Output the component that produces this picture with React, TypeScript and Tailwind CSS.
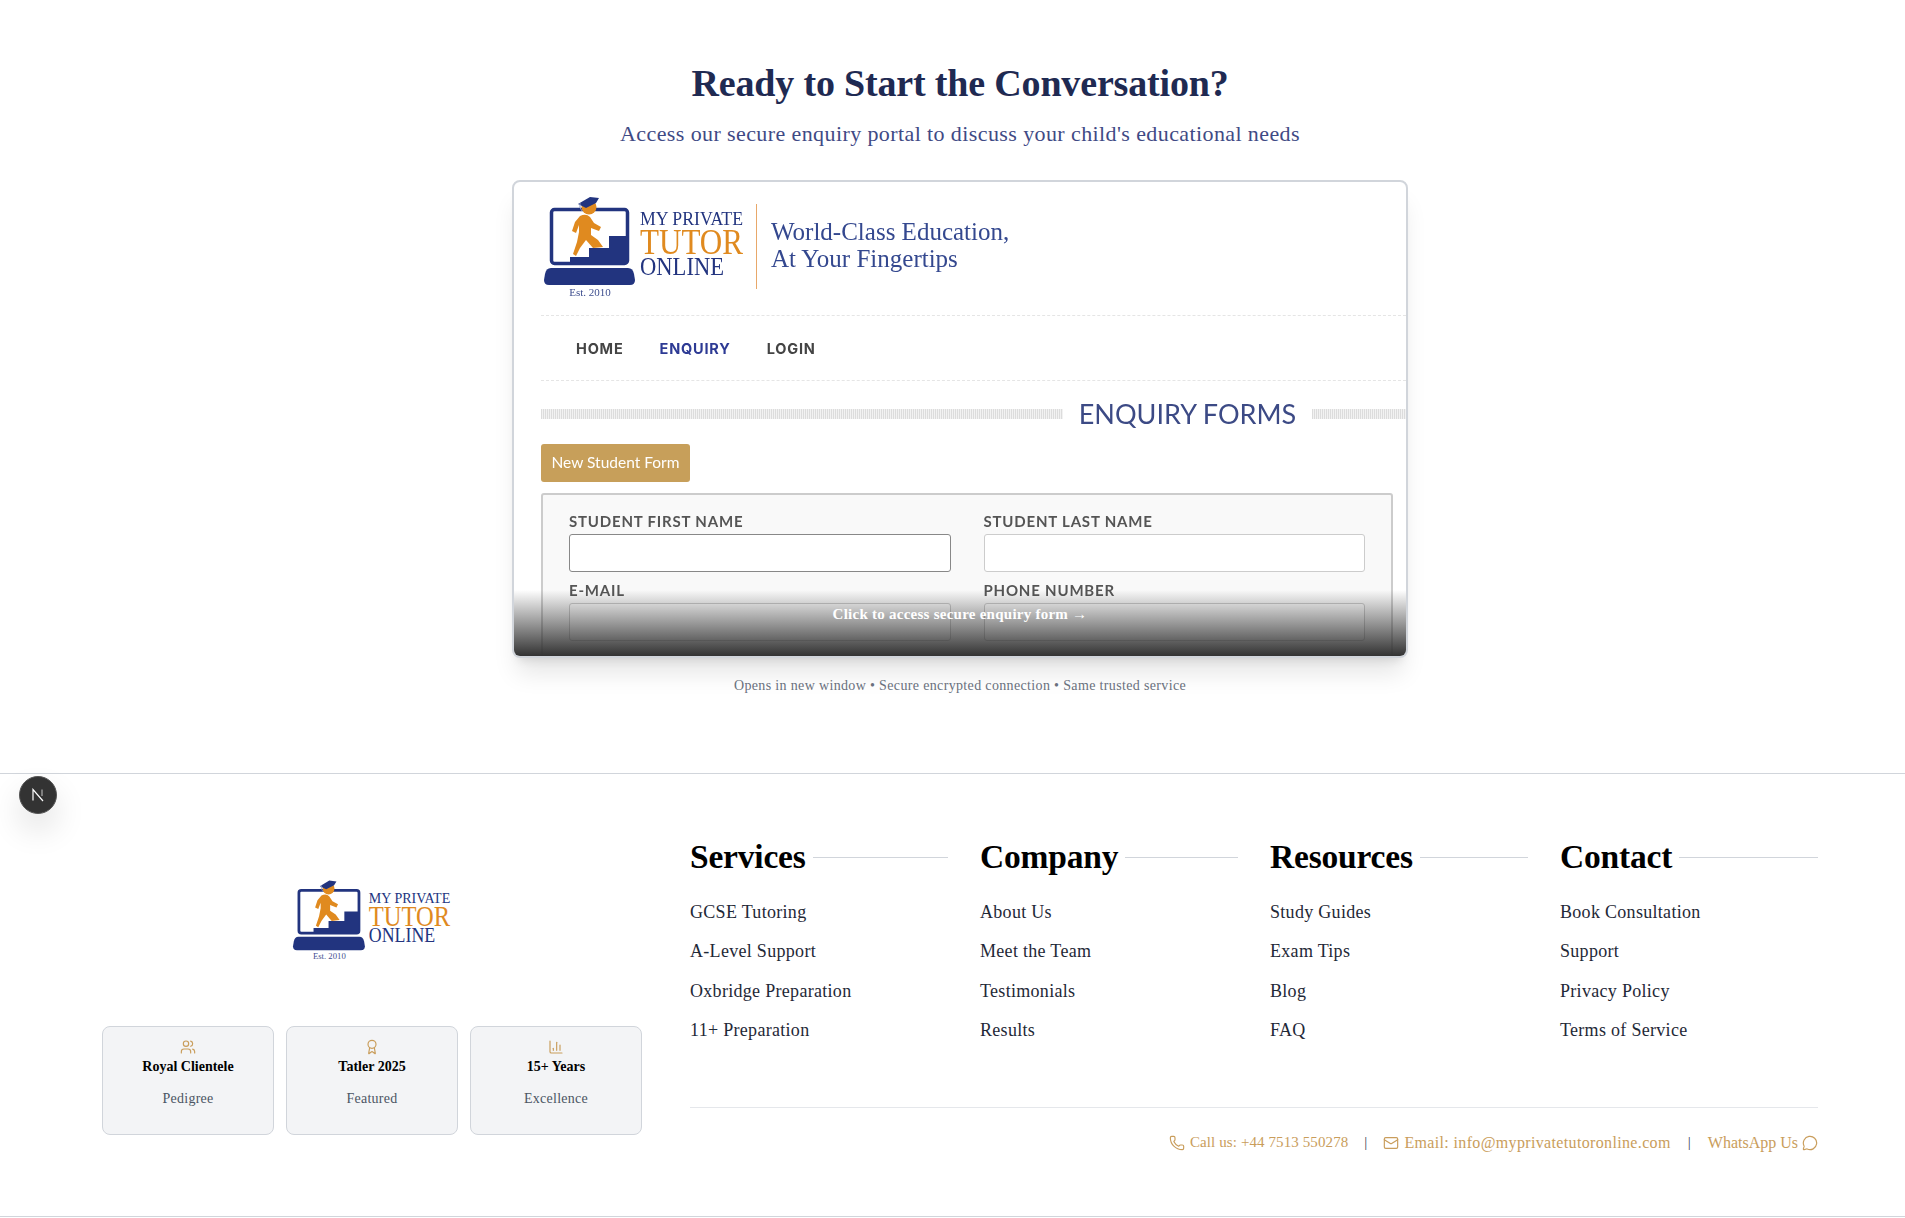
import { Award, ChartColumn, Mail, MessageCircle, Phone, Users } from "lucide-react";

const serif = "font-['Liberation_Serif',serif]";
const hatch = "h-[10px] bg-[repeating-linear-gradient(90deg,#dcdcdc_0,#dcdcdc_1px,#f2f2f2_1px,#f2f2f2_2px)]";

const columns = [
  {
    title: "Services",
    links: ["GCSE Tutoring", "A-Level Support", "Oxbridge Preparation", "11+ Preparation"],
  },
  {
    title: "Company",
    links: ["About Us", "Meet the Team", "Testimonials", "Results"],
  },
  {
    title: "Resources",
    links: ["Study Guides", "Exam Tips", "Blog", "FAQ"],
  },
  {
    title: "Contact",
    links: ["Book Consultation", "Support", "Privacy Policy", "Terms of Service"],
  },
];

const badges = [
  { icon: Users, title: "Royal Clientele", sub: "Pedigree" },
  { icon: Award, title: "Tatler 2025", sub: "Featured" },
  { icon: ChartColumn, title: "15+ Years", sub: "Excellence" },
];

// Brand mark: laptop, stairs and the climbing student
function Logo({ className }: { className?: string }) {
  return (
    <svg viewBox="14 5 200 105" className={`overflow-visible ${className}`}>
      <rect x="21.5" y="19.5" width="76" height="54" rx="3" fill="#fff" stroke="#22347f" strokeWidth="3.5" />
      <path d="M40 72V67H59V58H79V46H97V72Z" fill="#22347f" />
      <path d="M15 84Q16 78 21 78H98Q103 78 104 84L105 90Q105 95 100 95H19Q14 95 14 90Z" fill="#22347f" />
      <circle cx="59" cy="17" r="7.5" fill="#e08a1f" />
      <path d="M48 14L60 7 69 8 66 13 56 18Z" fill="#22347f" />
      <path d="M50 13Q49 18 52 21" fill="none" stroke="#8f9ac4" strokeWidth="1" />
      <path
        d="M50 26Q56 23 60 27L64 33 71 37 69 41 61 38 61 45 68 50 73 57 63 58 56 50 50 58 46 66 43 64 47 52 49 42 49 35 46 43 42 41 45 32Z"
        fill="#e08a1f"
      />
      <text x="110" y="35" fontFamily="Liberation Serif" fontSize="18.6" fill="#22347f" textLength="103" lengthAdjust="spacingAndGlyphs">
        MY PRIVATE
      </text>
      <text x="110" y="64" fontFamily="Liberation Serif" fontSize="36" fill="#e08a1f" textLength="103" lengthAdjust="spacingAndGlyphs">
        TUTOR
      </text>
      <text x="110" y="85" fontFamily="Liberation Serif" fontSize="25.5" fill="#22347f" textLength="84" lengthAdjust="spacingAndGlyphs">
        ONLINE
      </text>
      <text x="60" y="106" textAnchor="middle" fontFamily="Liberation Serif" fontSize="11" fill="#3f4f8f">
        Est. 2010
      </text>
    </svg>
  );
}

function Field({ label, focused }: { label: string; focused?: boolean }) {
  return (
    <div>
      <p className="h-[23px] font-['Lato',sans-serif] text-[15px] leading-[20px] font-bold tracking-[0.8px] text-[#555]">{label}</p>
      <div className={`h-[38px] rounded-[3px] bg-white border ${focused ? "border-[#888]" : "border-[#ccc]"}`} />
    </div>
  );
}

function EnquiryPreview() {
  return (
    <div className="relative h-[478px] overflow-hidden rounded-lg border-2 border-[#d1d5db] bg-white shadow-xl">
      <div className="pl-[27px] blur-[0.35px]">
        <div className="flex h-[133px] items-start pt-[13px] pl-[3px]">
          <Logo className="h-[105px] w-[200px]" />
          <div className="mt-[9px] ml-[12px] h-[85px] w-px bg-[#e8a86a]" />
          <p className="mt-[23px] ml-[14px] font-['Liberation_Serif',serif] text-[25px] leading-[27px] text-[#34488f]">
            World-Class Education,
            <br />
            At Your Fingertips
          </p>
        </div>
        <div className="flex h-[66px] items-center gap-[36px] border-y border-dashed border-[#e5e5e5] pt-[1px] pl-[35px] font-['Inter',sans-serif] text-[14.5px] font-bold tracking-[0.8px] text-[#444]">
          <span>HOME</span>
          <span className="text-[#2d3a94]">ENQUIRY</span>
          <span>LOGIN</span>
        </div>
        <div className="mt-[13px] flex h-[40px] items-center">
          <div className={`w-[522px] ${hatch}`} />
          <h3 className="w-[249px] text-center font-['Lato',sans-serif] text-[27px] text-[#3c4a85]">ENQUIRY FORMS</h3>
          <div className={`flex-1 ${hatch}`} />
        </div>
        <div className="mt-[10px] flex h-[38px] w-[149px] items-center justify-center rounded-[3px] bg-[#c79f5a] font-['Lato',sans-serif] text-[15.5px] text-white">
          New Student Form
        </div>
        <div className="mt-[11px] mr-[13px] h-[200px] rounded-[3px] border-2 border-[#ccc] bg-[#f9f9f9] px-[26px] pt-[16px]">
          <div className="grid grid-cols-2 gap-x-[33px] gap-y-[8px]">
            <Field label="STUDENT FIRST NAME" focused />
            <Field label="STUDENT LAST NAME" />
            <Field label="E-MAIL" />
            <Field label="PHONE NUMBER" />
          </div>
        </div>
      </div>
      <div className="absolute inset-x-0 bottom-0 flex h-[66px] justify-center bg-linear-to-b from-transparent to-[#333] pt-[15px]">
        <span className={`${serif} text-[15px] leading-[18px] font-bold tracking-[0.25px] text-white`}>
          Click to access secure enquiry form →
        </span>
      </div>
    </div>
  );
}

export default function App() {
  return (
    <div className={`relative min-h-[1218px] bg-white ${serif}`}>
      {/* centred on 960: the original page is 15px wider than the window */}
      <section className="flex h-[774px] flex-col items-center border-b border-[#d1d5db] pt-[58px] pl-[15px]">
        <h2 className="text-[38px] leading-[50px] font-bold tracking-[-0.17px] text-[#1f2a52]">Ready to Start the Conversation?</h2>
        <p className="mt-[12px] text-[22px] leading-[28px] tracking-[0.4px] text-[#3f4a85]">
          Access our secure enquiry portal to discuss your child's educational needs
        </p>
        <div className="mt-[32px] w-[896px]">
          <EnquiryPreview />
        </div>
        <p className="mt-[19px] text-[14px] leading-[18px] tracking-[0.35px] text-[#6b7280]">
          Opens in new window • Secure encrypted connection • Same trusted service
        </p>
      </section>

      <div className="absolute top-[776px] left-[19px] flex h-[38px] w-[38px] items-center justify-center rounded-full border border-[#555] bg-[#333] shadow-[0_16px_32px_rgba(0,0,0,0.12)]">
        <svg viewBox="0 0 14 14" className="h-[14px] w-[14px]" fill="none">
          <path d="M2 12.5V1.5L12 13" stroke="#fff" strokeWidth="1.2" />
          <path d="M11 1.5V8" stroke="#bbb" strokeWidth="1.1" />
        </svg>
      </div>

      <footer className="flex h-[443px] gap-[48px] border-b border-[#d1d5db] pr-[87px] pl-[102px]">
        <div className="w-[540px]">
          <div className="flex justify-center pt-[105px]">
            <Logo className="h-[83px] w-[158px]" />
          </div>
          <div className="mt-[64px] grid grid-cols-3 gap-[12px]">
            {badges.map((badge) => (
              <div key={badge.title} className="h-[109px] rounded-lg border border-[#d1d5db] bg-[#f3f4f6] pt-[12px] text-center">
                <badge.icon className="mx-auto h-4 w-4 text-[#c99d5b]" strokeWidth={1.75} />
                <p className="mt-[3px] text-[14px] leading-[18px] font-bold text-black">{badge.title}</p>
                <p className="mt-[14px] text-[14px] leading-[18px] tracking-[0.25px] text-[#4b5563]">{badge.sub}</p>
              </div>
            ))}
          </div>
        </div>

        <div className="flex-1 pt-[60px]">
          <div className="grid grid-cols-4 gap-[32px]">
            {columns.map((col) => (
              <div key={col.title}>
                <div className="flex items-center gap-[7px]">
                  <h4 className="text-[33.5px] leading-[46px] font-bold tracking-[-0.2px] text-black">{col.title}</h4>
                  <div className="h-px flex-1 bg-[#d1d5db]" />
                </div>
                <ul className="mt-[20px]">
                  {col.links.map((link) => (
                    <li key={link} className="h-[39.3px] text-[18px] leading-[24px] tracking-[0.3px] text-[#1f2937]">
                      {link}
                    </li>
                  ))}
                </ul>
              </div>
            ))}
          </div>
          <div className="mt-[50px] flex h-[70px] items-center justify-end border-t border-[#e5e7eb] text-[#c99d5b]">
            <span className="flex items-center gap-[5px] text-[15px] tracking-[0.1px]">
              <Phone className="h-4 w-4" strokeWidth={1.75} />
              Call us: +44 7513 550278
            </span>
            <span className="mx-[16px] text-[15px] text-[#374151]">|</span>
            <span className="flex items-center gap-[5px] text-[16px] tracking-[0.35px]">
              <Mail className="h-4 w-4" strokeWidth={1.75} />
              Email: info@myprivatetutoronline.com
            </span>
            <span className="mx-[17px] text-[15px] text-[#374151]">|</span>
            <span className="flex items-center gap-[4px] text-[16px]">
              WhatsApp Us
              <MessageCircle className="h-4 w-4" strokeWidth={1.75} />
            </span>
          </div>
        </div>
      </footer>
    </div>
  );
}
